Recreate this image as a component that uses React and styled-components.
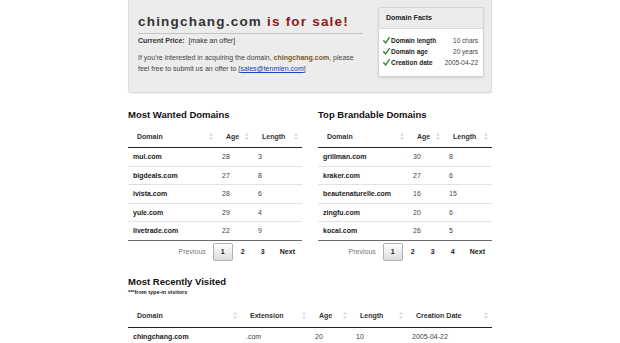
import styled, { createGlobalStyle } from "styled-components";

const GlobalStyle = createGlobalStyle`
  body {
    margin: 0;
    background: #fff;
    font-family: "Liberation Sans", Arial, sans-serif;
    color: #333;
  }
`;

const mostWanted = [
  ["mui.com", 28, 3],
  ["bigdeals.com", 27, 8],
  ["ivista.com", 28, 6],
  ["yule.com", 29, 4],
  ["livetrade.com", 22, 9],
];

const brandable = [
  ["grillman.com", 30, 8],
  ["kraker.com", 27, 6],
  ["beautenaturelle.com", 16, 15],
  ["zingfu.com", 20, 6],
  ["kocal.com", 26, 5],
];

const facts = [
  ["Domain length", "10 chars"],
  ["Domain age", "20 years"],
  ["Creation date", "2005-04-22"],
];

const SortIcon = () => (
  <svg width="4" height="7" viewBox="0 0 4 7">
    <path d="M2 0 L4 2.6 H0 Z M2 7 L4 4.4 H0 Z" fill="#d6d6d6" />
  </svg>
);

const Check = () => (
  <svg width="7" height="7" viewBox="0 0 10 10">
    <path d="M1 5.5 L3.8 8.5 L9 1" fill="none" stroke="#2e8b2e" strokeWidth="2" strokeLinecap="round" />
  </svg>
);

const DataTable = ({ cols, rows, widths }) => (
  <Table>
    <colgroup>
      {widths.map((w, i) => (
        <col key={i} style={{ width: w }} />
      ))}
    </colgroup>
    <thead>
      <tr>
        {cols.map((c) => (
          <Th key={c}>
            <HeadInner>
              {c}
              <SortIcon />
            </HeadInner>
          </Th>
        ))}
      </tr>
    </thead>
    <tbody>
      {rows.map((r) => (
        <tr key={r[0]}>
          {r.map((v, i) => (
            <Td key={i} $bold={i === 0}>
              {v}
            </Td>
          ))}
        </tr>
      ))}
    </tbody>
  </Table>
);

const Pager = ({ pages }) => (
  <Pagination>
    <PageBtn $muted>Previous</PageBtn>
    {Array.from({ length: pages }, (_, i) => (
      <PageNum key={i} $current={i === 0}>
        {i + 1}
      </PageNum>
    ))}
    <PageBtn>Next</PageBtn>
  </Pagination>
);

export default function App() {
  return (
    <>
      <GlobalStyle />
      <Page>
        <SaleBox>
          <SaleMain>
            <Title>
              chingchang.com <Red>is for sale!</Red>
            </Title>
            <Price>
              <b>Current Price:</b>&nbsp; [make an offer]
            </Price>
            <Text>
              If you're interested in acquiring the domain, <Domain>chingchang.com</Domain>, please
              feel free to submit us an offer to [<Mail href="#">sales@tenmien.com</Mail>]
            </Text>
          </SaleMain>
          <Facts>
            <FactsHead>Domain Facts</FactsHead>
            <FactsBody>
              {facts.map(([k, v]) => (
                <FactRow key={k}>
                  <FactKey>
                    <Check />
                    {k}
                  </FactKey>
                  <span>{v}</span>
                </FactRow>
              ))}
            </FactsBody>
          </Facts>
        </SaleBox>

        <TwoCols>
          <Column>
            <Heading>Most Wanted Domains</Heading>
            <DataTable cols={["Domain", "Age", "Length"]} rows={mostWanted} widths={[89, 36, 49]} />
            <Pager pages={3} />
          </Column>
          <Column>
            <Heading>Top Brandable Domains</Heading>
            <DataTable cols={["Domain", "Age", "Length"]} rows={brandable} widths={[90, 36, 48]} />
            <Pager pages={4} />
          </Column>
        </TwoCols>

        <Recent>
          <Heading>Most Recently Visited</Heading>
          <Sub>***from type-in visitors</Sub>
          <DataTable
            cols={["Domain", "Extension", "Age", "Length", "Creation Date"]}
            rows={[["chingchang.com", ".com", 20, 10, "2005-04-22"]]}
            widths={[113, 69, 41, 56, 85]}
          />
        </Recent>
      </Page>
    </>
  );
}

const Page = styled.div`
  width: 364px;
  margin: 0 auto;
`;

const SaleBox = styled.div`
  display: flex;
  justify-content: space-between;
  background: #ececec;
  border: 1px solid #dcdcdc;
  border-top: none;
  border-radius: 0 0 3px 3px;
  box-shadow: 0 1px 1px rgba(0, 0, 0, 0.06);
  height: 93px;
  box-sizing: border-box;
  padding: 7px 7px 0 9px;
`;

const SaleMain = styled.div`
  width: 225px;
  padding-top: 7px;
`;

const Title = styled.h1`
  margin: 0;
  font-size: 13.5px;
  line-height: 16px;
  font-weight: bold;
  letter-spacing: 1.2px;
  color: #333;
  padding-bottom: 3px;
  border-bottom: 1px solid #c4c4c4;
`;

const Red = styled.span`
  color: #8b1a1a;
`;

const Price = styled.div`
  font-size: 7px;
  line-height: 9px;
  margin-top: 2px;
  color: #333;
`;

const Text = styled.p`
  margin: 7px 0 0;
  font-size: 7px;
  line-height: 11px;
  color: #444;
`;

const Domain = styled.b`
  color: #7a5a1c;
`;

const Mail = styled.a`
  color: #1a44b8;
  text-decoration: underline;
`;

const Facts = styled.div`
  width: 106px;
  height: 70px;
  background: #fff;
  border: 1px solid #d4d4d4;
  border-radius: 2px;
  box-shadow: 0 1px 2px rgba(0, 0, 0, 0.12);
  box-sizing: border-box;
  overflow: hidden;
`;

const FactsHead = styled.div`
  background: #ececec;
  border-bottom: 1px solid #dadada;
  height: 20px;
  line-height: 20px;
  padding-left: 7px;
  font-size: 7px;
  font-weight: bold;
  color: #222;
`;

const FactsBody = styled.div`
  padding: 6px 5px 0 4px;
`;

const FactRow = styled.div`
  display: flex;
  justify-content: space-between;
  font-size: 6.5px;
  line-height: 11px;
  color: #444;
`;

const FactKey = styled.span`
  display: flex;
  align-items: center;
  gap: 1px;
  font-weight: bold;
  color: #222;
`;

const TwoCols = styled.div`
  display: flex;
  justify-content: space-between;
  margin-top: 15px;
`;

const Column = styled.section`
  width: 174px;
  flex: none;
`;

const Heading = styled.h2`
  margin: 0;
  font-size: 9.5px;
  line-height: 14px;
  font-weight: bold;
  color: #111;
`;

const Table = styled.table`
  border-collapse: collapse;
  table-layout: fixed;
  width: 100%;
  margin-top: 3px;
  font-size: 7px;
  border-bottom: 1.5px solid #6a6a6a;
`;

const Th = styled.th`
  text-align: left;
  font-weight: bold;
  color: #333;
  height: 22px;
  padding: 0 4px 0 9px;
  border-bottom: 1.5px solid #222;
`;

const HeadInner = styled.div`
  display: flex;
  justify-content: space-between;
  align-items: center;
`;

const Td = styled.td`
  height: 18.5px;
  padding: 0 5px;
  box-sizing: border-box;
  border-top: 1px solid #e2e2e2;
  font-weight: ${(p) => (p.$bold ? "bold" : "normal")};
  color: ${(p) => (p.$bold ? "#222" : "#444")};
  white-space: nowrap;
`;

const Pagination = styled.div`
  display: flex;
  justify-content: flex-end;
  align-items: center;
  margin-top: 2px;
  font-size: 7px;
`;

const PageBtn = styled.span`
  padding: 0 7px;
  line-height: 18px;
  color: ${(p) => (p.$muted ? "#777" : "#222")};
  font-weight: ${(p) => (p.$muted ? "normal" : "bold")};
`;

const PageNum = styled.span`
  width: 20px;
  height: 18px;
  line-height: 16px;
  box-sizing: border-box;
  text-align: center;
  font-weight: bold;
  color: #222;
  border: 1px solid ${(p) => (p.$current ? "#b0b0b0" : "transparent")};
  border-radius: 2px;
  background: ${(p) => (p.$current ? "linear-gradient(#fff, #dcdcdc)" : "transparent")};
`;

const Recent = styled.section`
  margin-top: 14px;
`;

const Sub = styled.div`
  font-size: 5.5px;
  font-weight: bold;
  color: #222;
  line-height: 6px;
  margin-bottom: 10px;
`;
